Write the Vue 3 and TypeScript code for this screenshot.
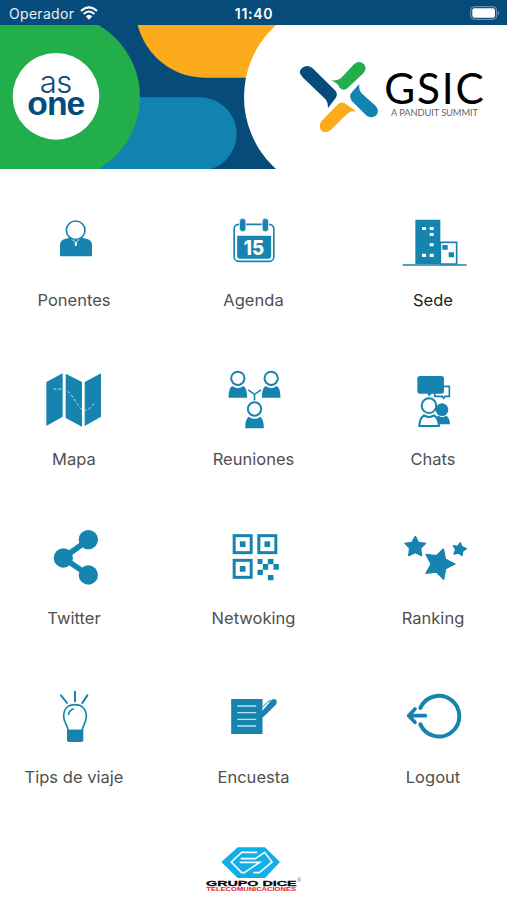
<script setup lang="ts">
interface MenuItem {
  id: string
  label: string
  viewBox: string
  strong?: boolean
}

const items: MenuItem[] = [
  { id: 'speakers', label: 'Ponentes', viewBox: '-3 0 330 225' },
  { id: 'agenda', label: 'Agenda', viewBox: '-4.5 0 330 225' },
  { id: 'venue', label: 'Sede', viewBox: '-6 0 330 225', strong: true },
  { id: 'map', label: 'Mapa', viewBox: '-3 12 330 225' },
  { id: 'meetings', label: 'Reuniones', viewBox: '-4.5 12 330 225' },
  { id: 'chats', label: 'Chats', viewBox: '-6 12 330 225' },
  { id: 'twitter', label: 'Twitter', viewBox: '-3 9 330 225' },
  { id: 'network', label: 'Netwoking', viewBox: '535.5 9 330 225' },
  { id: 'ranking', label: 'Ranking', viewBox: '-6 9 330 225' },
  { id: 'tips', label: 'Tips de viaje', viewBox: '-3 6 330 225' },
  { id: 'survey', label: 'Encuesta', viewBox: '535.5 6 330 225' },
  { id: 'logout', label: 'Logout', viewBox: '1074 6 330 225' },
]
</script>

<template>
  <div class="screen">
    <header class="status">
      <div class="carrier">
        <span>Operador</span>
        <svg class="wifi" viewBox="0 0 54 42">
          <path d="M3 15Q27-7 51 15" />
          <path d="M11 24Q27 9 43 24" />
          <path class="dot" d="M17 31Q27 22 37 31L27 41Z" />
        </svg>
      </div>
      <span class="time">11:40</span>
      <svg class="battery" viewBox="0 0 90 42">
        <rect class="shell" x="2" y="2" width="78" height="38" rx="11" />
        <rect class="charge" x="7" y="7" width="68" height="28" rx="6" />
        <path class="charge dim" d="M84 14Q90 21 84 28Z" />
      </svg>
    </header>

    <svg class="banner" viewBox="0 75 1521 432">
      <rect class="navy" y="75" width="1521" height="432" />
      <path class="orange" d="M407 25A208 208 0 0 0 615 233H850V25Z" />
      <path class="blue" d="M240 292H600A110 110 0 0 1 600 512H240Z" />
      <circle class="green" cx="171" cy="291" r="249" />
      <rect class="green" y="75" width="172" height="432" />
      <circle class="white" cx="168" cy="289" r="130" />
      <circle class="white" cx="1023" cy="291" r="291" />
      <rect class="white" x="1023" y="75" width="498" height="432" />
      <text class="as" x="119" y="279" textLength="98">as</text>
      <text class="one" x="82" y="346" textLength="174">one</text>

      <path class="navy" d="M907 231Q892 214 907 203Q922 192 937 204L1005 271Q1015 282 1007 294L984 324Q984 305 975 296Z" />
      <path class="green" d="M993 241Q1014 243 1024 233L1062 193Q1078 179 1092 193Q1102 207 1090 220L1043 264Q1031 274 1019 264Q1016 251 993 241Z" />
      <path class="blue" d="M1078 252Q1075 271 1087 282L1128 319Q1139 334 1129 346Q1116 357 1100 347L1055 302Q1045 289 1056 276Z" />
      <path class="orange" d="M1068 334Q1052 332 1042 341L992 390Q979 402 965 393Q954 379 964 364L1012 314Q1026 301 1039 313Z" />

      <text class="gsic" x="1153" y="313" textLength="298">GSIC</text>
      <text class="summit" x="1173" y="347" textLength="261">A PANDUIT SUMMIT</text>
    </svg>

    <main class="menu">
      <div v-for="item in items" :key="item.id" class="item">
        <svg class="icon" :viewBox="item.viewBox">
          <g v-if="item.id === 'speakers'">
            <path class="fill" d="M120 154V119Q121 105 135 102L146 99H189L201 102Q215 105 216 119V154Z" />
            <circle class="open" cx="167" cy="76" r="28" stroke-width="5" />
            <path class="cut" d="M155 104L167 112L179 104M160 102L164 110M175 102L171 110" stroke-width="2" />
            <path class="hole" d="M164 112H171L170 123H165Z" />
          </g>

          <g v-else-if="item.id === 'agenda'">
            <rect class="open" x="101" y="58" width="119" height="111" rx="14" stroke-width="5" />
            <path class="fill" d="M110 92H212V152Q212 161 203 161H119Q110 161 110 152Z" />
            <rect class="pin" x="117" y="40" width="19" height="40" rx="9.5" />
            <rect class="pin" x="185" y="40" width="19" height="40" rx="9.5" />
            <text class="day" x="130" y="149" textLength="61" lengthAdjust="spacingAndGlyphs">15</text>
          </g>

          <g v-else-if="item.id === 'venue'">
            <path class="fill" d="M106 44H181V177H106Z" />
            <path class="open" d="M181 112H230V177H181Z" stroke-width="5" />
            <path class="line" d="M70 180H258" stroke-width="5" />
            <path class="fill" d="M187 120H203V134H187ZM206 142H222V157H206Z" />
            <path class="hole" d="M126 66H138V75H126ZM149 66H161V75H149ZM149 84H161V93H149ZM149 115H161V124H149ZM126 146H138V156H126ZM149 146H161V156H149Z" />
          </g>

          <g v-else-if="item.id === 'map'">
            <path class="fill" d="M79 66L128 40V170L79 198ZM137 41L186 66V200L137 174ZM194 66L243 40V170L194 198Z" />
            <path class="cut" d="M100 87H128Q145 91 154 105L176 138Q188 158 207 147L225 128" stroke-width="3" stroke-dasharray="9 6" />
          </g>

          <g v-else-if="item.id === 'meetings'">
            <g v-for="[x, y] in [[112, 55], [212, 55], [162, 147]]" :key="x" :transform="`translate(${x} ${y})`">
              <path class="fill" d="M-28 58Q-28 30-17 23Q0 36 17 23Q28 30 28 58Z" />
              <circle class="open" r="20" stroke-width="6" />
            </g>
            <path class="line" d="M145 91L162 103L180 91M162 103V119" stroke-width="5" />
          </g>

          <g v-else-if="item.id === 'chats'">
            <path class="open" d="M164 79H208V109H195L191 115L187 109H164Z" stroke-width="5" />
            <path class="fill" d="M120 48H184Q192 48 192 56V93Q192 101 184 101H155L147 110L143 101H120Q112 101 112 93V56Q112 48 120 48Z" />
            <circle class="fill" cx="186" cy="149" r="19" />
            <path class="fill" d="M168 193V171L176 167Q187 175 198 167Q209 171 210 193Z" />
            <circle class="open" cx="147" cy="137" r="22" stroke-width="6" />
            <path class="open" d="M118 198Q119 174 132 166Q147 176 162 166Q175 174 177 198Z" stroke-width="6" />
          </g>

          <g v-else-if="item.id === 'twitter'">
            <path class="line" d="M205 59L130 114L205 165" stroke-width="17" />
            <circle class="fill" cx="205" cy="59" r="29" />
            <circle class="fill" cx="130" cy="114" r="29" />
            <circle class="fill" cx="205" cy="165" r="29" />
          </g>

          <g v-else-if="item.id === 'network'">
            <g v-for="[x, y] in [[637, 43], [711, 43], [637, 117]]" :key="`${x}-${y}`" :transform="`translate(${x} ${y})`">
              <rect class="open" x="4" y="4" width="51" height="51" stroke-width="9" />
              <rect class="fill" x="21" y="21" width="17" height="17" />
            </g>
            <path class="fill" d="M711 117H726V132H742V117H759V132H775V149H759V133H743V149H727V165H711V149H727V132H711ZM742 165H759V181H742Z" />
          </g>

          <g v-else-if="item.id === 'ranking'" class="stars">
            <path d="M106 49L115 67L137 70L122 85L125 107L106 98L86 107L89 85L75 70L96 67Z" />
            <path d="M190 87L196 117L225 132L197 146L191 178L169 156L138 160L153 132L138 103L169 107Z" />
            <path d="M241 68L246 80L259 86L248 94L246 107L236 99L222 102L227 89L220 77L233 79Z" />
          </g>

          <g v-else-if="item.id === 'tips'">
            <path class="line" d="M123 46L141 69M165 35V64M202 46L187 69" stroke-width="6" />
            <path class="open" d="M145 152C141 133 131 126 131 109C131 86 145 74 165 74C185 74 199 87 199 109C199 126 190 133 186 152Z" stroke-width="5" />
            <path class="line" d="M146 103Q147 91 160 87" stroke-width="5" />
            <path class="fill" d="M141 149H190V182Q188 186 182 186H149Q143 186 141 182Z" />
          </g>

          <g v-else-if="item.id === 'survey'">
            <path class="fill" d="M632 57H726V162H632Z" />
            <path class="fill" d="M722 97L750 64Q758 54 766 59Q772 65 766 74L731 109L721 116Z" />
            <path class="line" d="M728 80L741 66Q747 61 752 62" stroke-width="3" />
            <path class="cut" d="M650 78H707M650 98H707M650 118H707M650 138H707" stroke-width="4" />
          </g>

          <g v-else>
            <path class="line" d="M1201 84A61 61 0 1 1 1201 133" stroke-width="12" />
            <path class="line" d="M1216 107H1166M1185 87L1166 107L1185 127" stroke-width="11" stroke-linejoin="round" />
          </g>
        </svg>
        <span class="label" :class="{ strong: item.strong }">{{ item.label }}</span>
      </div>
    </main>

    <footer class="sponsor">
      <svg class="dice" viewBox="42 15 300 150">
        <path class="cyan" d="M143 22H225L270 66L225 114H143L94 66Z" />
        <path class="facet" d="M201 37H155L124 66L155 98H163L209 67H149" />
        <path class="facet" d="M152 56H196L224 37L246 66L208 98H190" />
        <text class="grupo" x="48" y="137" textLength="272" lengthAdjust="spacingAndGlyphs">GRUPO DICE</text>
        <text class="tele" x="49" y="154" textLength="269" lengthAdjust="spacingAndGlyphs">TELECOMUNICACIONES</text>
        <text class="mark" x="322" y="125">®</text>
      </svg>
    </footer>
  </div>
</template>

<style>
body {
  margin: 0;
  background: #fff;
}
</style>

<style scoped>
.screen {
  display: flex;
  flex-direction: column;
  width: 507px;
  height: 900px;
  overflow: hidden;
  background: #fff;
  font-family: Inter, "Liberation Sans", sans-serif;
}

.status {
  display: grid;
  grid-template-columns: 1fr auto 1fr;
  align-items: center;
  flex: none;
  height: 25px;
  padding: 2px 7px 0 9px;
  box-sizing: border-box;
  background: #074b7a;
  color: #e8f0f5;
  font-size: 14px;
  line-height: 23px;
}

.carrier {
  display: flex;
  align-items: center;
  gap: 6px;
  letter-spacing: 0.3px;
}

.wifi {
  width: 18px;
  height: 14px;
  margin-top: -2px;
}

.wifi path {
  fill: none;
  stroke: #fff;
  stroke-width: 6;
}

.wifi .dot {
  fill: #fff;
  stroke: none;
}

.time {
  font-weight: 600;
  letter-spacing: 0.7px;
  margin-right: 1px;
  color: #fff;
}

.battery {
  width: 30px;
  height: 14px;
  margin-top: -2px;
  justify-self: end;
}

.shell {
  fill: none;
  stroke: #7d9fb8;
  stroke-width: 3;
}

.charge {
  fill: #fff;
}

.dim {
  opacity: 0.5;
}

.banner {
  display: block;
  flex: none;
  width: 507px;
  height: 144px;
}

.navy { fill: #074b7a; }
.orange { fill: #fbab1b; }
.blue { fill: #1083b0; }
.green { fill: #22ae4b; }
.white { fill: #fff; }

.as {
  fill: #074b7a;
  font: 300 93px Inter, sans-serif;
}

.one {
  fill: #074b7a;
  font: 700 101px "Liberation Sans", sans-serif;
}

.gsic {
  fill: #000;
  font: 400 127px Lato, sans-serif;
}

.summit {
  fill: #666;
  font: 400 28px Lato, sans-serif;
}

.menu {
  display: grid;
  grid-template-columns: repeat(3, 148px);
  grid-auto-rows: 159px;
  justify-content: space-between;
  flex: none;
  padding-top: 36px;
}

.item {
  display: flex;
  flex-direction: column;
  align-items: center;
}

.icon {
  display: block;
  width: 110px;
  height: 75px;
}

.label {
  margin-top: 9px;
  color: #505050;
  font-size: 16.5px;
  line-height: 22px;
  letter-spacing: 0.02px;
  white-space: nowrap;
}

.strong {
  color: #222;
}

.fill {
  fill: #1784af;
}

.open {
  fill: #fff;
  stroke: #1784af;
}

.line {
  fill: none;
  stroke: #1784af;
  stroke-linecap: round;
}

.cut {
  fill: none;
  stroke: #b5e3f2;
}

.hole {
  fill: #fff;
}

.pin {
  fill: #1784af;
  stroke: #fff;
  stroke-width: 2;
}

.day {
  fill: #fff;
  font: 800 62px Inter, sans-serif;
}

.stars path {
  fill: #1784af;
  stroke: #1784af;
  stroke-width: 4;
  stroke-linejoin: round;
}

.sponsor {
  display: flex;
  justify-content: center;
  margin-top: 4px;
}

.dice {
  width: 100px;
  height: 50px;
}

.cyan {
  fill: #12aee8;
}

.facet {
  fill: none;
  stroke: #f2fbfe;
  stroke-width: 5;
}

.grupo {
  fill: #050505;
  stroke: #050505;
  stroke-width: 0.8;
  font: 700 24px "Liberation Sans", sans-serif;
}

.tele {
  fill: #e5202b;
  font: 700 15px "Liberation Sans", sans-serif;
}

.mark {
  fill: #555;
  font: 400 16px "Liberation Sans", sans-serif;
}
</style>
